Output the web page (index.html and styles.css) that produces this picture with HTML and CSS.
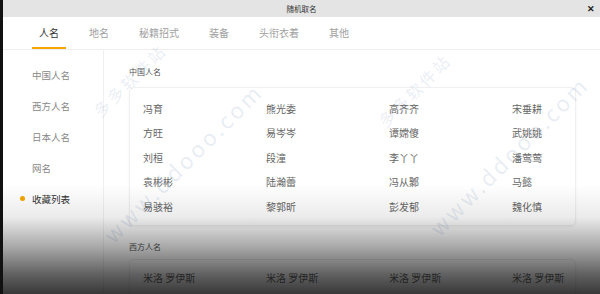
FILE: index.html
```html
<!DOCTYPE html>
<html lang="zh-CN">
<head>
    <meta charset="UTF-8">
    <title>随机取名</title>
    <link rel="stylesheet" href="styles.css">
</head>
<body>
    <div class="window">
        <div class="titlebar">
            <span class="title">随机取名</span>
            <span class="close">✕</span>
        </div>
        <ul class="tabs">
            <li class="active">人名</li>
            <li>地名</li>
            <li>秘籍招式</li>
            <li>装备</li>
            <li>头衔衣着</li>
            <li>其他</li>
        </ul>
        <div class="main">
            <ul class="sidebar">
                <li>中国人名</li>
                <li>西方人名</li>
                <li>日本人名</li>
                <li>网名</li>
                <li class="active">收藏列表</li>
            </ul>
            <div class="content">
                <p class="group-title">中国人名</p>
                <ul class="names">
                    <li>冯育</li><li>熊光委</li><li>高齐齐</li><li>宋垂耕</li>
                    <li>方旺</li><li>易岑岑</li><li>谭嫦傻</li><li>武姚姚</li>
                    <li>刘桓</li><li>段潼</li><li>李丫丫</li><li>潘莺莺</li>
                    <li>袁彬彬</li><li>陆瀚蕾</li><li>冯从鄹</li><li>马懿</li>
                    <li>易骇裕</li><li>黎郭昕</li><li>彭发郁</li><li>魏化慎</li>
                </ul>
                <p class="group-title">西方人名</p>
                <ul class="names western">
                    <li>米洛 罗伊斯</li><li>米洛 罗伊斯</li><li>米洛 罗伊斯</li><li>米洛 罗伊斯</li>
                </ul>
            </div>
        </div>

        <!-- 水印 -->
        <span class="mark mark-a">多多软件站</span>
        <span class="mark mark-b">www.ddooo.com</span>
        <span class="mark mark-c">多多软件站</span>
        <span class="mark mark-d">www.ddooo.com</span>

        <div class="shade"></div>
    </div>
</body>
</html>
```

FILE: styles.css
```css
/* 全局样式 */
* {
    box-sizing: border-box;
}

body {
    margin: 0;
    background-color: #111;
    font-family: 'Noto Sans CJK SC', 'Noto Sans', sans-serif;
}

ul, p {
    margin: 0;
    padding: 0;
    list-style: none;
}

.window {
    position: relative;
    margin-left: 3px;
    height: 294px;
    background-color: #fff;
    overflow: hidden;
}

.titlebar {
    display: flex;
    justify-content: center;
    align-items: center;
    position: relative;
    height: 17px;
    background-color: #e4e4e4;
}

.title {
    font-size: 7.5px;
    color: #333;
}

.close {
    position: absolute;
    right: 5px;
    top: 2px;
    font-size: 9px;
    font-weight: 700;
    color: #222;
}

.tabs {
    display: flex;
    gap: 16px;
    height: 33px;
    padding-left: 29px;
    border-bottom: 1px solid #eee;
}

.tabs li {
    display: flex;
    align-items: center;
    padding: 0 7px;
    border-bottom: 2px solid transparent;
    font-size: 10px;
    color: #a0a0a0;
}

.tabs li.active {
    color: #333;
    border-bottom-color: #f7a600;
}

.main {
    display: flex;
    height: 243px;
}

.sidebar {
    width: 101px;
    flex-shrink: 0;
    padding-top: 9px;
    border-right: 1px solid #f0f0f0;
}

.sidebar li {
    display: flex;
    align-items: center;
    height: 31px;
    padding-left: 29px;
    font-size: 9.5px;
    color: #888;
    position: relative;
}

.sidebar li.active {
    color: #333;
}

.sidebar li.active::before {
    content: "";
    position: absolute;
    left: 17px;
    top: 13px;
    width: 5px;
    height: 5px;
    border-radius: 50%;
    background-color: #f7a600;
}

.content {
    flex: 1;
    min-width: 0;
    padding: 16px 24px 0 25px;
}

.group-title {
    font-size: 8px;
    line-height: 12px;
    color: #555;
}

.names {
    display: grid;
    grid-template-columns: repeat(3, 123px) 1fr;
    grid-auto-rows: 24.5px;
    align-items: center;
    margin: 9px 0 15px;
    padding: 8px 13px 6px;
    border: 1px solid #f0f0f0;
    border-radius: 5px;
    box-shadow: 0 1px 3px rgba(0, 0, 0, 0.05);
}

.names.western {
    margin-top: 6px;
    padding-top: 6px;
}

.names li {
    font-size: 10px;
    color: #666;
    white-space: nowrap;
}

.mark {
    position: absolute;
    color: rgba(110, 140, 190, 0.16);
    transform: rotate(-45deg);
    white-space: nowrap;
}

.mark-a { left: 79px;  top: 68px;  font-size: 16px; letter-spacing: 3px; }
.mark-b { left: 72px;  top: 146px; font-size: 22px; letter-spacing: 3px; }
.mark-c { left: 364px; top: 78px;  font-size: 16px; letter-spacing: 3px; }
.mark-d { left: 398px; top: 139px; font-size: 22px; letter-spacing: 3px; }

.shade {
    position: absolute;
    left: 0;
    right: 0;
    bottom: 0;
    height: 110px;
    pointer-events: none;
    background: linear-gradient(to bottom,
        rgba(0, 0, 0, 0) 0%,
        rgba(0, 0, 0, 0.08) 30%,
        rgba(0, 0, 0, 0.35) 58%,
        rgba(0, 0, 0, 0.62) 82%,
        rgba(0, 0, 0, 0.78) 100%);
}
```
